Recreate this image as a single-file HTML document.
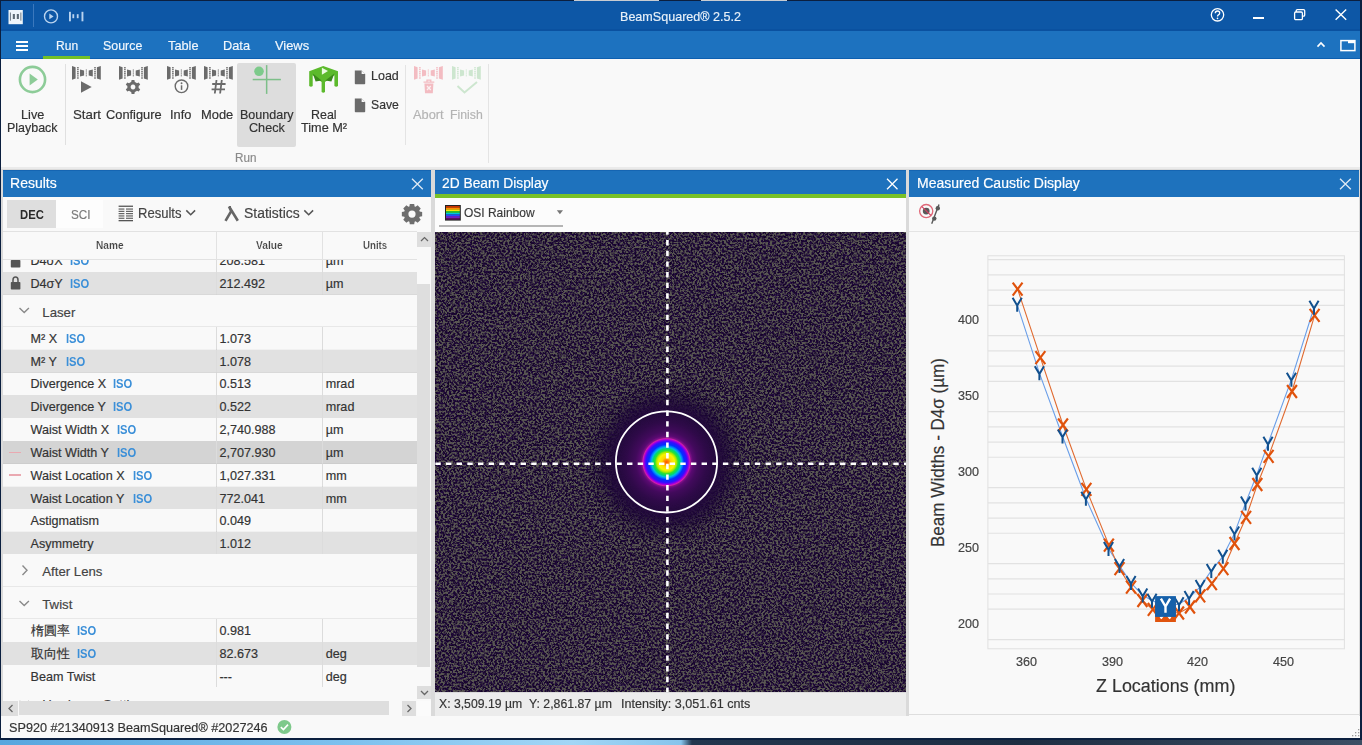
<!DOCTYPE html>
<html><head><meta charset="utf-8"><title>BeamSquared</title><style>*{margin:0;padding:0;box-sizing:border-box}
html,body{width:1362px;height:745px;overflow:hidden;background:#0b1f3f}
body{position:relative;font-family:"Liberation Sans",sans-serif}
.t{position:absolute;white-space:nowrap;line-height:1;transform-origin:0 0;-webkit-text-stroke:0.18px currentColor}
svg{overflow:visible}
</style></head><body>
<div style="position:absolute;left:0px;top:0px;width:1362px;height:745px;background:#0b1f3f;"></div>
<div style="position:absolute;left:0px;top:740px;width:1362px;height:5px;background:linear-gradient(90deg,#58a6de 0%,#7cc0ee 25%,#a2d6f6 42%,#86c4ec 50%,#22364e 50.8%,#1e2e42 75%,#34465c 95%,#3c4e64 100%);"></div>
<div style="position:absolute;left:574px;top:0px;width:85px;height:1px;background:#c8ccd2;"></div>
<div style="position:absolute;left:701px;top:0px;width:86px;height:1px;background:#c8ccd2;"></div>
<div style="position:absolute;left:1px;top:1px;width:1359px;height:29px;background:#0d57a6;"></div>
<div style="position:absolute;left:1px;top:30px;width:1359px;height:29px;background:#1d72bf;"></div>
<div style="position:absolute;left:1px;top:29.4px;width:1359px;height:1.2px;background:#0a51a0;"></div>
<div style="position:absolute;left:1px;top:57.8px;width:1359px;height:1.4px;background:#0d5fb0;"></div>
<div style="position:absolute;left:1px;top:59.2px;width:1359px;height:1px;background:#fdfdfd;"></div>
<div style="position:absolute;left:1px;top:59px;width:1359px;height:108px;background:#f9f9f9;"></div>
<div style="position:absolute;left:1px;top:167px;width:1359px;height:2.7px;background:#ebebeb;"></div>
<div style="position:absolute;left:1px;top:169px;width:1359px;height:547px;background:#dadada;"></div>
<div style="position:absolute;left:1px;top:716px;width:1359px;height:22px;background:#f9f9f9;"></div>
<svg style="position:absolute;left:8px;top:9px;" width="16" height="16" viewBox="0 0 16 16"><rect x="0.5" y="1" width="14.3" height="14.2" fill="#eef5fb"/><rect x="1.9" y="3.5" width="1.1" height="8.2" fill="#7a8590"/><rect x="4.8" y="5" width="2.1" height="5" fill="#5d6a75"/><rect x="8.8" y="5" width="2.1" height="5" fill="#5d6a75"/><rect x="12.3" y="3.5" width="1.1" height="8.2" fill="#7a8590"/></svg>
<div style="position:absolute;left:33px;top:4px;width:1px;height:23px;background:#3b78bd;"></div>
<svg style="position:absolute;left:42px;top:7px;" width="18" height="18" viewBox="0 0 18 18"><circle cx="9" cy="9.4" r="6.5" fill="none" stroke="#b9d3ef" stroke-width="1.4"/><path d="M7.3,6.6 L11.6,9.4 L7.3,12.2 Z" fill="#b9d3ef"/></svg>
<svg style="position:absolute;left:68px;top:11px;" width="18" height="12" viewBox="0 0 18 12"><rect x="1" y="0.8" width="1.9" height="9.5" fill="#b9d3ef"/><rect x="4.4" y="3.2" width="1.8" height="4" fill="#b9d3ef"/><rect x="8.8" y="3.2" width="1.8" height="4" fill="#b9d3ef"/><rect x="13.5" y="0.8" width="1.9" height="9.5" fill="#b9d3ef"/></svg>
<div class="t" id="t0" style="transform:scaleX(0.9241);left:620.40px;top:9.59px;font-size:13.6px;color:#e8f0f8;font-weight:normal;">BeamSquared® 2.5.2</div>
<svg style="position:absolute;left:1209px;top:7px;" width="18" height="18" viewBox="0 0 18 18"><circle cx="8.5" cy="7.8" r="6.2" fill="none" stroke="#fff" stroke-width="1.3"/><path d="M6.3,6.2 Q6.3,4 8.5,4 Q10.7,4 10.7,6 Q10.7,7.2 9.4,7.9 Q8.5,8.4 8.5,9.6" fill="none" stroke="#fff" stroke-width="1.3"/><circle cx="8.5" cy="11.4" r="0.8" fill="#fff"/></svg>
<div style="position:absolute;left:1253px;top:17px;width:11px;height:1.6px;background:#fff;"></div>
<svg style="position:absolute;left:1292px;top:7px;" width="16" height="15" viewBox="0 0 16 15"><rect x="4.2" y="2.6" width="8.5" height="6.5" rx="1.2" fill="none" stroke="#fff" stroke-width="1.3"/><rect x="2.6" y="5" width="7.8" height="7.6" rx="1.2" fill="#0d57a6" stroke="#fff" stroke-width="1.3"/></svg>
<svg style="position:absolute;left:1334px;top:8px;" width="14" height="13" viewBox="0 0 14 13"><path d="M1.6,1.4 L12.2,11.8 M12.2,1.4 L1.6,11.8" stroke="#fff" stroke-width="1.4"/></svg>
<div style="position:absolute;left:16px;top:41px;width:12.2px;height:1.6px;background:#fff;"></div>
<div style="position:absolute;left:16px;top:45px;width:12.2px;height:1.6px;background:#fff;"></div>
<div style="position:absolute;left:16px;top:49px;width:12.2px;height:1.6px;background:#fff;"></div>
<div class="t" id="t1" style="transform:scaleX(0.8862);left:55.90px;top:39.29px;font-size:13.6px;color:#f2f7fc;font-weight:normal;">Run</div>
<div class="t" id="t2" style="transform:scaleX(0.9123);left:102.90px;top:39.29px;font-size:13.6px;color:#f2f7fc;font-weight:normal;">Source</div>
<div class="t" id="t3" style="transform:scaleX(0.9385);left:168.00px;top:39.29px;font-size:13.6px;color:#f2f7fc;font-weight:normal;">Table</div>
<div class="t" id="t4" style="transform:scaleX(0.9402);left:223.20px;top:39.29px;font-size:13.6px;color:#f2f7fc;font-weight:normal;">Data</div>
<div class="t" id="t5" style="transform:scaleX(0.9468);left:274.90px;top:39.29px;font-size:13.6px;color:#f2f7fc;font-weight:normal;">Views</div>
<div style="position:absolute;left:43px;top:56px;width:47px;height:3px;background:#73c026;"></div>
<svg style="position:absolute;left:1314px;top:38px;" width="14" height="12" viewBox="0 0 14 12"><path d="M3.5,8.6 L7,5 L10.5,8.6" fill="none" stroke="#fff" stroke-width="1.6"/></svg>
<svg style="position:absolute;left:1339px;top:39px;" width="18" height="13" viewBox="0 0 18 13"><rect x="1.9" y="1.6" width="14" height="10" fill="none" stroke="#fff" stroke-width="1.5"/><rect x="9" y="1.6" width="7" height="2.6" fill="#fff"/></svg>
<svg style="position:absolute;left:17px;top:64px;" width="31" height="31" viewBox="0 0 31 31"><circle cx="15.5" cy="15.5" r="12.6" fill="none" stroke="#8dcc98" stroke-width="2.6"/><path d="M12.6,9.5 L20.8,15.6 L12.6,21.6 Z" fill="#8dcc98"/></svg>
<div class="t" id="t6" style="transform:scaleX(1.0421);left:20.90px;top:108.77px;font-size:12.2px;color:#333333;font-weight:normal;">Live</div>
<div class="t" id="t7" style="transform:scaleX(1.0212);left:6.50px;top:121.97px;font-size:12.2px;color:#333333;font-weight:normal;">Playback</div>
<div style="position:absolute;left:65px;top:64px;width:1px;height:81px;background:#e0e0e0;"></div>
<svg style="position:absolute;left:72px;top:66px;" width="30" height="15" viewBox="0 0 30 15"><g fill="#6b6b6b"><path d="M0,0 L3.6,1.2 L3.6,12.6 L0,13.8 Z"/><path d="M8,3.6 L12.1,4.4 L12.1,9.4 L8,10.4 Z"/><path d="M16.7,4.4 L20.8,3.6 L20.8,10.4 L16.7,9.4 Z"/><path d="M24.9,1.2 L28.8,0 L28.8,13.8 L24.9,12.6 Z"/></g><g stroke="#6b6b6b" stroke-dasharray="1.3,0.6" fill="none"><line x1="5.9" y1="0.9" x2="5.9" y2="12.9" stroke-width="1.5"/><line x1="14.3" y1="3.4" x2="14.3" y2="10.6" stroke-width="0.9"/><line x1="23" y1="0.9" x2="23" y2="12.9" stroke-width="1.5"/></g></svg>
<svg style="position:absolute;left:80px;top:80px;" width="13" height="14" viewBox="0 0 13 14"><path d="M1,1.3 L11.7,7 L1,12.7 Z" fill="#6b6b6b"/></svg>
<div class="t" id="t8" style="transform:scaleX(1.0874);left:73.20px;top:108.77px;font-size:12.2px;color:#333333;font-weight:normal;">Start</div>
<svg style="position:absolute;left:119px;top:66px;" width="30" height="15" viewBox="0 0 30 15"><g fill="#6b6b6b"><path d="M0,0 L3.6,1.2 L3.6,12.6 L0,13.8 Z"/><path d="M8,3.6 L12.1,4.4 L12.1,9.4 L8,10.4 Z"/><path d="M16.7,4.4 L20.8,3.6 L20.8,10.4 L16.7,9.4 Z"/><path d="M24.9,1.2 L28.8,0 L28.8,13.8 L24.9,12.6 Z"/></g><g stroke="#6b6b6b" stroke-dasharray="1.3,0.6" fill="none"><line x1="5.9" y1="0.9" x2="5.9" y2="12.9" stroke-width="1.5"/><line x1="14.3" y1="3.4" x2="14.3" y2="10.6" stroke-width="0.9"/><line x1="23" y1="0.9" x2="23" y2="12.9" stroke-width="1.5"/></g></svg>
<svg style="position:absolute;left:124px;top:78px;" width="18" height="18" viewBox="0 0 18 18"><g transform="translate(9,9)"><path fill="#6b6b6b" d="M-1.4,-7 L1.4,-7 L1.8,-5 Q3,-4.6 3.9,-3.8 L5.8,-4.6 L7.2,-2.2 L5.6,-0.9 Q5.8,0 5.6,0.9 L7.2,2.2 L5.8,4.6 L3.9,3.8 Q3,4.6 1.8,5 L1.4,7 L-1.4,7 L-1.8,5 Q-3,4.6 -3.9,3.8 L-5.8,4.6 L-7.2,2.2 L-5.6,0.9 Q-5.8,0 -5.6,-0.9 L-7.2,-2.2 L-5.8,-4.6 L-3.9,-3.8 Q-3,-4.6 -1.8,-5 Z M0,-2.4 A2.4,2.4 0 1 0 0.01,-2.4 Z"/></g></svg>
<div class="t" id="t9" style="transform:scaleX(1.0518);left:105.60px;top:108.77px;font-size:12.2px;color:#333333;font-weight:normal;">Configure</div>
<svg style="position:absolute;left:167px;top:66px;" width="30" height="15" viewBox="0 0 30 15"><g fill="#6b6b6b"><path d="M0,0 L3.6,1.2 L3.6,12.6 L0,13.8 Z"/><path d="M8,3.6 L12.1,4.4 L12.1,9.4 L8,10.4 Z"/><path d="M16.7,4.4 L20.8,3.6 L20.8,10.4 L16.7,9.4 Z"/><path d="M24.9,1.2 L28.8,0 L28.8,13.8 L24.9,12.6 Z"/></g><g stroke="#6b6b6b" stroke-dasharray="1.3,0.6" fill="none"><line x1="5.9" y1="0.9" x2="5.9" y2="12.9" stroke-width="1.5"/><line x1="14.3" y1="3.4" x2="14.3" y2="10.6" stroke-width="0.9"/><line x1="23" y1="0.9" x2="23" y2="12.9" stroke-width="1.5"/></g></svg>
<svg style="position:absolute;left:173px;top:78.2px;" width="18" height="18" viewBox="0 0 18 18"><circle cx="8.5" cy="8.3" r="6.3" fill="none" stroke="#6b6b6b" stroke-width="1.4"/><rect x="7.8" y="7.3" width="1.5" height="4.6" fill="#6b6b6b"/><circle cx="8.55" cy="5.3" r="0.95" fill="#6b6b6b"/></svg>
<div class="t" id="t10" style="transform:scaleX(1.0519);left:170.40px;top:108.77px;font-size:12.2px;color:#333333;font-weight:normal;">Info</div>
<svg style="position:absolute;left:204px;top:66px;" width="30" height="15" viewBox="0 0 30 15"><g fill="#6b6b6b"><path d="M0,0 L3.6,1.2 L3.6,12.6 L0,13.8 Z"/><path d="M8,3.6 L12.1,4.4 L12.1,9.4 L8,10.4 Z"/><path d="M16.7,4.4 L20.8,3.6 L20.8,10.4 L16.7,9.4 Z"/><path d="M24.9,1.2 L28.8,0 L28.8,13.8 L24.9,12.6 Z"/></g><g stroke="#6b6b6b" stroke-dasharray="1.3,0.6" fill="none"><line x1="5.9" y1="0.9" x2="5.9" y2="12.9" stroke-width="1.5"/><line x1="14.3" y1="3.4" x2="14.3" y2="10.6" stroke-width="0.9"/><line x1="23" y1="0.9" x2="23" y2="12.9" stroke-width="1.5"/></g></svg>
<svg style="position:absolute;left:210px;top:78px;" width="18" height="18" viewBox="0 0 18 18"><g stroke="#6b6b6b" stroke-width="1.8" fill="none"><path d="M6.5,2 L4.8,15.5 M11.8,2 L10.1,15.5 M2.2,6 L15.6,6 M1.6,11.4 L15,11.4"/></g></svg>
<div class="t" id="t11" style="transform:scaleX(1.0590);left:200.80px;top:108.77px;font-size:12.2px;color:#333333;font-weight:normal;">Mode</div>
<div style="position:absolute;left:237.3px;top:62.7px;width:58.6px;height:84px;background:#dddddd;border-radius:2px"></div>
<svg style="position:absolute;left:250px;top:63px;" width="34" height="34" viewBox="0 0 34 34"><circle cx="9" cy="8.3" r="4.8" fill="#7dca8b"/><rect x="15.9" y="2.1" width="1.5" height="28.8" fill="#7dbf89"/><rect x="2.7" y="15.8" width="28.2" height="1.5" fill="#7dbf89"/></svg>
<div class="t" id="t12" style="transform:scaleX(1.0274);left:240.40px;top:108.77px;font-size:12.2px;color:#333333;font-weight:normal;">Boundary</div>
<div class="t" id="t13" style="transform:scaleX(1.0363);left:248.70px;top:121.97px;font-size:12.2px;color:#333333;font-weight:normal;">Check</div>
<svg style="position:absolute;left:300px;top:60px;" width="45" height="36" viewBox="0 0 45 36"><g><path d="M23.2,6.1 L38,11.2 L38,26 Q36.2,27.4 34.4,26 L34.4,15.2 L25,22 L25,32 Q23.3,33.5 21.6,32 L21.6,22 L12.7,15.2 L12.7,26 Q11,27.4 9.2,26 L9.2,11.2 Z" fill="#5cba2c"/><path d="M12.8,13.6 L21.6,20.4 L15.6,21.5 Z M34.3,13.6 L25.4,20.4 L31.4,21.5 Z" fill="#3b8a1c"/><path d="M21.9,7.7 L28,11 L21.9,14.8 Z" fill="#eafbe0"/></g></svg>
<div class="t" id="t14" style="transform:scaleX(1.0208);left:310.60px;top:108.77px;font-size:12.2px;color:#333333;font-weight:normal;">Real</div>
<div class="t" id="t15" style="transform:scaleX(1.0399);left:300.60px;top:121.97px;font-size:12.2px;color:#333333;font-weight:normal;">Time M²</div>
<svg style="position:absolute;left:354px;top:69.5px;" width="12" height="15" viewBox="0 0 12 15"><path d="M0.8,0.5 L7.6,0.5 L11.2,4.1 L11.2,13.6 Q11.2,14.3 10.5,14.3 L1.5,14.3 Q0.8,14.3 0.8,13.6 Z" fill="#6b6b6b"/><path d="M7.6,0.5 L7.6,4.1 L11.2,4.1 Z" fill="#f9f9f9"/></svg>
<div class="t" id="t16" style="transform:scaleX(1.0249);left:370.60px;top:70.47px;font-size:12.2px;color:#333333;font-weight:normal;">Load</div>
<svg style="position:absolute;left:354px;top:97.5px;" width="12" height="15" viewBox="0 0 12 15"><path d="M0.8,0.5 L7.6,0.5 L11.2,4.1 L11.2,13.6 Q11.2,14.3 10.5,14.3 L1.5,14.3 Q0.8,14.3 0.8,13.6 Z" fill="#6b6b6b"/><path d="M7.6,0.5 L7.6,4.1 L11.2,4.1 Z" fill="#f9f9f9"/></svg>
<div class="t" id="t17" style="transform:scaleX(1.0007);left:370.60px;top:98.87px;font-size:12.2px;color:#333333;font-weight:normal;">Save</div>
<div style="position:absolute;left:405px;top:64.8px;width:1px;height:80px;background:#e4e4e4;"></div>
<svg style="position:absolute;left:414.3px;top:66.3px;" width="30" height="15" viewBox="0 0 30 15"><g fill="#f3bcc2"><path d="M0,0 L3.6,1.2 L3.6,12.6 L0,13.8 Z"/><path d="M8,3.6 L12.1,4.4 L12.1,9.4 L8,10.4 Z"/><path d="M16.7,4.4 L20.8,3.6 L20.8,10.4 L16.7,9.4 Z"/><path d="M24.9,1.2 L28.8,0 L28.8,13.8 L24.9,12.6 Z"/></g><g stroke="#f3bcc2" stroke-dasharray="1.3,0.6" fill="none"><line x1="5.9" y1="0.9" x2="5.9" y2="12.9" stroke-width="1.5"/><line x1="14.3" y1="3.4" x2="14.3" y2="10.6" stroke-width="0.9"/><line x1="23" y1="0.9" x2="23" y2="12.9" stroke-width="1.5"/></g></svg>
<svg style="position:absolute;left:422px;top:79px;" width="14" height="15" viewBox="0 0 14 15"><path d="M1.5,3.2 L12.3,3.2 M5,2.6 L5,1.2 L8.8,1.2 L8.8,2.6" stroke="#f3bcc2" stroke-width="1.3" fill="none"/><path d="M2.4,4.4 L11.4,4.4 L10.8,14.2 L3,14.2 Z" fill="#f3bcc2"/><path d="M5,7 L8.8,11 M8.8,7 L5,11" stroke="#fbf0f1" stroke-width="1.3"/></svg>
<div class="t" id="t18" style="transform:scaleX(1.0501);left:413.00px;top:108.77px;font-size:12.2px;color:#b4b4b4;font-weight:normal;">Abort</div>
<svg style="position:absolute;left:452.3px;top:66.3px;" width="30" height="15" viewBox="0 0 30 15"><g fill="#cde6cf"><path d="M0,0 L3.6,1.2 L3.6,12.6 L0,13.8 Z"/><path d="M8,3.6 L12.1,4.4 L12.1,9.4 L8,10.4 Z"/><path d="M16.7,4.4 L20.8,3.6 L20.8,10.4 L16.7,9.4 Z"/><path d="M24.9,1.2 L28.8,0 L28.8,13.8 L24.9,12.6 Z"/></g><g stroke="#cde6cf" stroke-dasharray="1.3,0.6" fill="none"><line x1="5.9" y1="0.9" x2="5.9" y2="12.9" stroke-width="1.5"/><line x1="14.3" y1="3.4" x2="14.3" y2="10.6" stroke-width="0.9"/><line x1="23" y1="0.9" x2="23" y2="12.9" stroke-width="1.5"/></g></svg>
<svg style="position:absolute;left:455px;top:79px;" width="26" height="15" viewBox="0 0 26 15"><path d="M2.5,7 L9.5,13.4 L22,3" fill="none" stroke="#cde6cf" stroke-width="2"/></svg>
<div class="t" id="t19" style="transform:scaleX(1.0057);left:450.00px;top:108.77px;font-size:12.2px;color:#b4b4b4;font-weight:normal;">Finish</div>
<div style="position:absolute;left:488.4px;top:64px;width:1px;height:99px;background:#e4e4e4;"></div>
<div class="t" id="t20" style="transform:scaleX(0.9571);left:234.50px;top:152.17px;font-size:12.2px;color:#8a8a8a;font-weight:normal;">Run</div>
<div style="position:absolute;left:3px;top:169.7px;width:428px;height:546.3px;background:#f9f9f9;"></div>
<div style="position:absolute;left:3px;top:169.7px;width:428px;height:27.8px;background:#1e72bd;"></div>
<div style="position:absolute;left:3px;top:169.7px;width:428px;height:1px;background:#1565b2;"></div>
<div class="t" id="t21" style="transform:scaleX(1.0170);left:10.00px;top:176.62px;font-size:13.8px;color:#ffffff;font-weight:normal;">Results</div>
<svg style="position:absolute;left:411px;top:178px;" width="13" height="12" viewBox="0 0 13 12"><path d="M1,0.8 L11.8,11.3 M11.8,0.8 L1,11.3" stroke="#dfeaf5" stroke-width="1.3"/></svg>
<div style="position:absolute;left:3px;top:197.5px;width:428px;height:33.5px;background:#f9f9f9;"></div>
<div style="position:absolute;left:7px;top:200px;width:49px;height:28.2px;background:#dedede;"></div>
<div style="position:absolute;left:56px;top:200px;width:46.7px;height:28.2px;background:#fdfdfd;"></div>
<div class="t" id="t22" style="transform:scaleX(0.9094);left:20.10px;top:208.70px;font-size:12.4px;color:#2a2a2a;font-weight:bold;-webkit-text-stroke:0;">DEC</div>
<div class="t" id="t23" style="transform:scaleX(0.9440);left:70.50px;top:208.70px;font-size:12.4px;color:#7a7a7a;font-weight:normal;">SCI</div>
<svg style="position:absolute;left:118px;top:205px;" width="16" height="17" viewBox="0 0 16 17"><g fill="#555"><rect x="0.6" y="0.6" width="14.4" height="1.3"/><rect x="0.6" y="15" width="14.4" height="1.3"/><rect x="0.6" y="3.5" width="5.8" height="1.1"/><rect x="8" y="3.5" width="7" height="1.1"/><rect x="0.6" y="5.8" width="5.8" height="1.1"/><rect x="8" y="5.8" width="7" height="1.1"/><rect x="0.6" y="8.1" width="5.8" height="1.1"/><rect x="8" y="8.1" width="7" height="1.1"/><rect x="0.6" y="10.4" width="5.8" height="1.1"/><rect x="8" y="10.4" width="7" height="1.1"/><rect x="0.6" y="12.7" width="5.8" height="1.1"/><rect x="8" y="12.7" width="7" height="1.1"/></g></svg>
<div class="t" id="t24" style="transform:scaleX(0.9453);left:137.50px;top:206.92px;font-size:13.8px;color:#444444;font-weight:normal;">Results</div>
<svg style="position:absolute;left:185px;top:209px;" width="12" height="8" viewBox="0 0 12 8"><path d="M1.3,1.4 L5.7,5.8 L10.1,1.4" fill="none" stroke="#555" stroke-width="1.5"/></svg>
<svg style="position:absolute;left:224px;top:205px;" width="16" height="17" viewBox="0 0 16 17"><path d="M1.5,15.8 L7.2,6.2 L5,1.5 M5.2,1.8 L13.8,15.8" fill="none" stroke="#666" stroke-width="2.6" stroke-linejoin="round"/></svg>
<div class="t" id="t25" style="transform:scaleX(1.0090);left:243.60px;top:206.92px;font-size:13.8px;color:#444444;font-weight:normal;">Statistics</div>
<svg style="position:absolute;left:302.5px;top:209px;" width="12" height="8" viewBox="0 0 12 8"><path d="M1.3,1.4 L5.7,5.8 L10.1,1.4" fill="none" stroke="#555" stroke-width="1.5"/></svg>
<svg style="position:absolute;left:400px;top:202px;" width="24" height="24" viewBox="0 0 24 24"><path d="M9.40,4.42 L9.80,1.94 L14.20,1.94 L14.60,4.42 L15.59,4.83 L17.63,3.35 L20.75,6.47 L19.27,8.51 L19.68,9.50 L22.16,9.90 L22.16,14.30 L19.68,14.70 L19.27,15.69 L20.75,17.73 L17.63,20.85 L15.59,19.37 L14.60,19.78 L14.20,22.26 L9.80,22.26 L9.40,19.78 L8.41,19.37 L6.37,20.85 L3.25,17.73 L4.73,15.69 L4.32,14.70 L1.84,14.30 L1.84,9.90 L4.32,9.50 L4.73,8.51 L3.25,6.47 L6.37,3.35 L8.41,4.83 Z M15.60,12.10 A3.6,3.6 0 1 0 8.40,12.10 A3.6,3.6 0 1 0 15.60,12.10 Z" fill="#6e6e6e" fill-rule="evenodd"/></svg>
<div style="position:absolute;left:3px;top:231px;width:413.5px;height:1px;background:#e2e2e2;"></div>
<div style="position:absolute;left:3px;top:259.5px;width:413.5px;height:441px;overflow:hidden">
<div style="position:absolute;left:0px;top:-10.099999999999994px;width:413.5px;height:22.7px;background:#f9f9f9;"></div>
<div class="t" id="t26" style="left:27.50px;top:-4.17px;font-size:12.6px;color:#333333;font-weight:normal;">D4σX</div>
<div class="t" id="t27" style="transform:scaleX(0.8893);left:66.50px;top:-4.17px;font-size:12.6px;color:#3b8fd8;font-weight:bold;-webkit-text-stroke:0;">ISO</div>
<div class="t" id="t28" style="left:216.40px;top:-4.17px;font-size:12.6px;color:#333333;font-weight:normal;">208.581</div>
<div class="t" id="t29" style="left:322.70px;top:-4.17px;font-size:12.6px;color:#333333;font-weight:normal;">µm</div>
<div style="position:absolute;left:212.5px;top:-10.099999999999994px;width:1px;height:22.7px;background:#dcdcdc;"></div>
<div style="position:absolute;left:318.8px;top:-10.099999999999994px;width:1px;height:22.7px;background:#dcdcdc;"></div>
<div style="position:absolute;left:0px;top:12.0px;width:413.5px;height:0.6px;background:rgba(0,0,0,0.03);"></div>
<svg style="position:absolute;left:6.5px;top:-5.900000000000006px;" width="12" height="15" viewBox="0 0 12 15"><path d="M3,6 L3,4 Q3,1 5.5,1 Q8,1 8,4 L8,6" fill="none" stroke="#555" stroke-width="1.5"/><rect x="0.8" y="6" width="9.6" height="7.6" rx="0.8" fill="#555"/></svg>
<div style="position:absolute;left:0px;top:12.600000000000023px;width:413.5px;height:22.6px;background:#e1e1e1;"></div>
<div class="t" id="t30" style="left:27.50px;top:18.53px;font-size:12.6px;color:#333333;font-weight:normal;">D4σY</div>
<div class="t" id="t31" style="transform:scaleX(0.8893);left:66.50px;top:18.53px;font-size:12.6px;color:#3b8fd8;font-weight:bold;-webkit-text-stroke:0;">ISO</div>
<div class="t" id="t32" style="left:216.40px;top:18.53px;font-size:12.6px;color:#333333;font-weight:normal;">212.492</div>
<div class="t" id="t33" style="left:322.70px;top:18.53px;font-size:12.6px;color:#333333;font-weight:normal;">µm</div>
<div style="position:absolute;left:212.5px;top:12.600000000000023px;width:1px;height:22.6px;background:#dcdcdc;"></div>
<div style="position:absolute;left:318.8px;top:12.600000000000023px;width:1px;height:22.6px;background:#dcdcdc;"></div>
<div style="position:absolute;left:0px;top:34.60000000000002px;width:413.5px;height:0.6px;background:rgba(0,0,0,0.03);"></div>
<svg style="position:absolute;left:6.5px;top:16.80000000000001px;" width="12" height="15" viewBox="0 0 12 15"><path d="M3,6 L3,4 Q3,1 5.5,1 Q8,1 8,4 L8,6" fill="none" stroke="#555" stroke-width="1.5"/><rect x="0.8" y="6" width="9.6" height="7.6" rx="0.8" fill="#555"/></svg>
<div style="position:absolute;left:0px;top:35.19999999999999px;width:413.5px;height:32.4px;background:#f9f9f9;"></div>
<div style="position:absolute;left:0px;top:66.59999999999997px;width:413.5px;height:1px;background:#e8e8e8;"></div>
<svg style="position:absolute;left:15px;top:46.89999999999998px;" width="13" height="9" viewBox="0 0 13 9"><path d="M1.5,2 L6.2,6.6 L10.9,2" fill="none" stroke="#8a8a8a" stroke-width="1.4"/></svg>
<div class="t" id="t34" style="left:39.30px;top:46.13px;font-size:13.2px;color:#444444;font-weight:normal;">Laser</div>
<div style="position:absolute;left:0px;top:67.60000000000002px;width:413.5px;height:22.899999999999977px;background:#f9f9f9;"></div>
<div class="t" id="t35" style="left:27.50px;top:73.53px;font-size:12.6px;color:#333333;font-weight:normal;">M² X</div>
<div class="t" id="t36" style="transform:scaleX(0.8893);left:63.00px;top:73.53px;font-size:12.6px;color:#3b8fd8;font-weight:bold;-webkit-text-stroke:0;">ISO</div>
<div class="t" id="t37" style="left:216.40px;top:73.53px;font-size:12.6px;color:#333333;font-weight:normal;">1.073</div>
<div style="position:absolute;left:212.5px;top:67.60000000000002px;width:1px;height:22.899999999999977px;background:#dcdcdc;"></div>
<div style="position:absolute;left:318.8px;top:67.60000000000002px;width:1px;height:22.899999999999977px;background:#dcdcdc;"></div>
<div style="position:absolute;left:0px;top:89.89999999999998px;width:413.5px;height:0.6px;background:rgba(0,0,0,0.03);"></div>
<div style="position:absolute;left:0px;top:90.5px;width:413.5px;height:22.5px;background:#e1e1e1;"></div>
<div class="t" id="t38" style="left:27.50px;top:96.43px;font-size:12.6px;color:#333333;font-weight:normal;">M² Y</div>
<div class="t" id="t39" style="transform:scaleX(0.8893);left:63.00px;top:96.43px;font-size:12.6px;color:#3b8fd8;font-weight:bold;-webkit-text-stroke:0;">ISO</div>
<div class="t" id="t40" style="left:216.40px;top:96.43px;font-size:12.6px;color:#333333;font-weight:normal;">1.078</div>
<div style="position:absolute;left:212.5px;top:90.5px;width:1px;height:22.5px;background:#dcdcdc;"></div>
<div style="position:absolute;left:318.8px;top:90.5px;width:1px;height:22.5px;background:#dcdcdc;"></div>
<div style="position:absolute;left:0px;top:112.39999999999998px;width:413.5px;height:0.6px;background:rgba(0,0,0,0.03);"></div>
<div style="position:absolute;left:0px;top:113.0px;width:413.5px;height:22.80000000000001px;background:#f9f9f9;"></div>
<div class="t" id="t41" style="left:27.50px;top:118.93px;font-size:12.6px;color:#333333;font-weight:normal;">Divergence X</div>
<div class="t" id="t42" style="transform:scaleX(0.8893);left:110.40px;top:118.93px;font-size:12.6px;color:#3b8fd8;font-weight:bold;-webkit-text-stroke:0;">ISO</div>
<div class="t" id="t43" style="left:216.40px;top:118.93px;font-size:12.6px;color:#333333;font-weight:normal;">0.513</div>
<div class="t" id="t44" style="left:322.70px;top:118.93px;font-size:12.6px;color:#333333;font-weight:normal;">mrad</div>
<div style="position:absolute;left:212.5px;top:113.0px;width:1px;height:22.80000000000001px;background:#dcdcdc;"></div>
<div style="position:absolute;left:318.8px;top:113.0px;width:1px;height:22.80000000000001px;background:#dcdcdc;"></div>
<div style="position:absolute;left:0px;top:135.2px;width:413.5px;height:0.6px;background:rgba(0,0,0,0.03);"></div>
<div style="position:absolute;left:0px;top:135.8px;width:413.5px;height:23.0px;background:#e1e1e1;"></div>
<div class="t" id="t45" style="left:27.50px;top:141.73px;font-size:12.6px;color:#333333;font-weight:normal;">Divergence Y</div>
<div class="t" id="t46" style="transform:scaleX(0.8893);left:110.40px;top:141.73px;font-size:12.6px;color:#3b8fd8;font-weight:bold;-webkit-text-stroke:0;">ISO</div>
<div class="t" id="t47" style="left:216.40px;top:141.73px;font-size:12.6px;color:#333333;font-weight:normal;">0.522</div>
<div class="t" id="t48" style="left:322.70px;top:141.73px;font-size:12.6px;color:#333333;font-weight:normal;">mrad</div>
<div style="position:absolute;left:212.5px;top:135.8px;width:1px;height:23.0px;background:#dcdcdc;"></div>
<div style="position:absolute;left:318.8px;top:135.8px;width:1px;height:23.0px;background:#dcdcdc;"></div>
<div style="position:absolute;left:0px;top:158.2px;width:413.5px;height:0.6px;background:rgba(0,0,0,0.03);"></div>
<div style="position:absolute;left:0px;top:158.8px;width:413.5px;height:22.80000000000001px;background:#f9f9f9;"></div>
<div class="t" id="t49" style="left:27.50px;top:164.73px;font-size:12.6px;color:#333333;font-weight:normal;">Waist Width X</div>
<div class="t" id="t50" style="transform:scaleX(0.8893);left:114.00px;top:164.73px;font-size:12.6px;color:#3b8fd8;font-weight:bold;-webkit-text-stroke:0;">ISO</div>
<div class="t" id="t51" style="left:216.40px;top:164.73px;font-size:12.6px;color:#333333;font-weight:normal;">2,740.988</div>
<div class="t" id="t52" style="left:322.70px;top:164.73px;font-size:12.6px;color:#333333;font-weight:normal;">µm</div>
<div style="position:absolute;left:212.5px;top:158.8px;width:1px;height:22.80000000000001px;background:#dcdcdc;"></div>
<div style="position:absolute;left:318.8px;top:158.8px;width:1px;height:22.80000000000001px;background:#dcdcdc;"></div>
<div style="position:absolute;left:0px;top:181.0px;width:413.5px;height:0.6px;background:rgba(0,0,0,0.03);"></div>
<div style="position:absolute;left:0px;top:181.60000000000002px;width:413.5px;height:22.599999999999966px;background:#d4d4d4;"></div>
<div class="t" id="t53" style="left:27.50px;top:187.53px;font-size:12.6px;color:#333333;font-weight:normal;">Waist Width Y</div>
<div class="t" id="t54" style="transform:scaleX(0.8893);left:114.00px;top:187.53px;font-size:12.6px;color:#3b8fd8;font-weight:bold;-webkit-text-stroke:0;">ISO</div>
<div class="t" id="t55" style="left:216.40px;top:187.53px;font-size:12.6px;color:#333333;font-weight:normal;">2,707.930</div>
<div class="t" id="t56" style="left:322.70px;top:187.53px;font-size:12.6px;color:#333333;font-weight:normal;">µm</div>
<div style="position:absolute;left:212.5px;top:181.60000000000002px;width:1px;height:22.599999999999966px;background:#dcdcdc;"></div>
<div style="position:absolute;left:318.8px;top:181.60000000000002px;width:1px;height:22.599999999999966px;background:#dcdcdc;"></div>
<div style="position:absolute;left:0px;top:203.59999999999997px;width:413.5px;height:0.6px;background:rgba(0,0,0,0.03);"></div>
<div style="position:absolute;left:5.5px;top:192.0px;width:12.7px;height:1.8px;background:#eaa9b1;"></div>
<div style="position:absolute;left:0px;top:204.2px;width:413.5px;height:22.900000000000034px;background:#f9f9f9;"></div>
<div class="t" id="t57" style="left:27.50px;top:210.13px;font-size:12.6px;color:#333333;font-weight:normal;">Waist Location X</div>
<div class="t" id="t58" style="transform:scaleX(0.8893);left:130.00px;top:210.13px;font-size:12.6px;color:#3b8fd8;font-weight:bold;-webkit-text-stroke:0;">ISO</div>
<div class="t" id="t59" style="left:216.40px;top:210.13px;font-size:12.6px;color:#333333;font-weight:normal;">1,027.331</div>
<div class="t" id="t60" style="left:322.70px;top:210.13px;font-size:12.6px;color:#333333;font-weight:normal;">mm</div>
<div style="position:absolute;left:212.5px;top:204.2px;width:1px;height:22.900000000000034px;background:#dcdcdc;"></div>
<div style="position:absolute;left:318.8px;top:204.2px;width:1px;height:22.900000000000034px;background:#dcdcdc;"></div>
<div style="position:absolute;left:0px;top:226.5px;width:413.5px;height:0.6px;background:rgba(0,0,0,0.03);"></div>
<div style="position:absolute;left:5.5px;top:214.59999999999997px;width:12.7px;height:1.8px;background:#eaa9b1;"></div>
<div style="position:absolute;left:0px;top:227.10000000000002px;width:413.5px;height:22.5px;background:#e1e1e1;"></div>
<div class="t" id="t61" style="left:27.50px;top:233.03px;font-size:12.6px;color:#333333;font-weight:normal;">Waist Location Y</div>
<div class="t" id="t62" style="transform:scaleX(0.8893);left:130.00px;top:233.03px;font-size:12.6px;color:#3b8fd8;font-weight:bold;-webkit-text-stroke:0;">ISO</div>
<div class="t" id="t63" style="left:216.40px;top:233.03px;font-size:12.6px;color:#333333;font-weight:normal;">772.041</div>
<div class="t" id="t64" style="left:322.70px;top:233.03px;font-size:12.6px;color:#333333;font-weight:normal;">mm</div>
<div style="position:absolute;left:212.5px;top:227.10000000000002px;width:1px;height:22.5px;background:#dcdcdc;"></div>
<div style="position:absolute;left:318.8px;top:227.10000000000002px;width:1px;height:22.5px;background:#dcdcdc;"></div>
<div style="position:absolute;left:0px;top:249.0px;width:413.5px;height:0.6px;background:rgba(0,0,0,0.03);"></div>
<div style="position:absolute;left:0px;top:249.60000000000002px;width:413.5px;height:22.600000000000023px;background:#f9f9f9;"></div>
<div class="t" id="t65" style="left:27.50px;top:255.53px;font-size:12.6px;color:#333333;font-weight:normal;">Astigmatism</div>
<div class="t" id="t66" style="left:216.40px;top:255.53px;font-size:12.6px;color:#333333;font-weight:normal;">0.049</div>
<div style="position:absolute;left:212.5px;top:249.60000000000002px;width:1px;height:22.600000000000023px;background:#dcdcdc;"></div>
<div style="position:absolute;left:318.8px;top:249.60000000000002px;width:1px;height:22.600000000000023px;background:#dcdcdc;"></div>
<div style="position:absolute;left:0px;top:271.6px;width:413.5px;height:0.6px;background:rgba(0,0,0,0.03);"></div>
<div style="position:absolute;left:0px;top:272.20000000000005px;width:413.5px;height:22.5px;background:#e1e1e1;"></div>
<div class="t" id="t67" style="left:27.50px;top:278.13px;font-size:12.6px;color:#333333;font-weight:normal;">Asymmetry</div>
<div class="t" id="t68" style="left:216.40px;top:278.13px;font-size:12.6px;color:#333333;font-weight:normal;">1.012</div>
<div style="position:absolute;left:212.5px;top:272.20000000000005px;width:1px;height:22.5px;background:#dcdcdc;"></div>
<div style="position:absolute;left:318.8px;top:272.20000000000005px;width:1px;height:22.5px;background:#dcdcdc;"></div>
<div style="position:absolute;left:0px;top:294.1px;width:413.5px;height:0.6px;background:rgba(0,0,0,0.03);"></div>
<div style="position:absolute;left:0px;top:294.70000000000005px;width:413.5px;height:33.0px;background:#f9f9f9;"></div>
<div style="position:absolute;left:0px;top:326.70000000000005px;width:413.5px;height:1px;background:#e8e8e8;"></div>
<svg style="position:absolute;left:17px;top:304.70000000000005px;" width="9" height="13" viewBox="0 0 9 13"><path d="M2.5,1.5 L7,6.2 L2.5,10.9" fill="none" stroke="#8a8a8a" stroke-width="1.4"/></svg>
<div class="t" id="t69" style="left:39.30px;top:305.93px;font-size:13.2px;color:#444444;font-weight:normal;">After Lens</div>
<div style="position:absolute;left:0px;top:327.70000000000005px;width:413.5px;height:32.2px;background:#f9f9f9;"></div>
<div style="position:absolute;left:0px;top:358.9000000000001px;width:413.5px;height:1px;background:#e8e8e8;"></div>
<svg style="position:absolute;left:15px;top:339.30000000000007px;" width="13" height="9" viewBox="0 0 13 9"><path d="M1.5,2 L6.2,6.6 L10.9,2" fill="none" stroke="#8a8a8a" stroke-width="1.4"/></svg>
<div class="t" id="t70" style="left:39.30px;top:338.53px;font-size:13.2px;color:#444444;font-weight:normal;">Twist</div>
<div style="position:absolute;left:0px;top:359.9px;width:413.5px;height:22.7px;background:#f9f9f9;"></div>
<div class="t" id="t71" style="left:27.50px;top:365.83px;font-size:12.6px;color:#333333;font-weight:normal;">楕圓率</div>
<div class="t" id="t72" style="transform:scaleX(0.8893);left:74.00px;top:365.83px;font-size:12.6px;color:#3b8fd8;font-weight:bold;-webkit-text-stroke:0;">ISO</div>
<div class="t" id="t73" style="left:216.40px;top:365.83px;font-size:12.6px;color:#333333;font-weight:normal;">0.981</div>
<div style="position:absolute;left:212.5px;top:359.9px;width:1px;height:22.7px;background:#dcdcdc;"></div>
<div style="position:absolute;left:318.8px;top:359.9px;width:1px;height:22.7px;background:#dcdcdc;"></div>
<div style="position:absolute;left:0px;top:382.0px;width:413.5px;height:0.6px;background:rgba(0,0,0,0.03);"></div>
<div style="position:absolute;left:0px;top:382.6px;width:413.5px;height:23.1px;background:#e1e1e1;"></div>
<div class="t" id="t74" style="left:27.50px;top:388.53px;font-size:12.6px;color:#333333;font-weight:normal;">取向性</div>
<div class="t" id="t75" style="transform:scaleX(0.8893);left:74.00px;top:388.53px;font-size:12.6px;color:#3b8fd8;font-weight:bold;-webkit-text-stroke:0;">ISO</div>
<div class="t" id="t76" style="left:216.40px;top:388.53px;font-size:12.6px;color:#333333;font-weight:normal;">82.673</div>
<div class="t" id="t77" style="left:322.70px;top:388.53px;font-size:12.6px;color:#333333;font-weight:normal;">deg</div>
<div style="position:absolute;left:212.5px;top:382.6px;width:1px;height:23.1px;background:#dcdcdc;"></div>
<div style="position:absolute;left:318.8px;top:382.6px;width:1px;height:23.1px;background:#dcdcdc;"></div>
<div style="position:absolute;left:0px;top:405.1px;width:413.5px;height:0.6px;background:rgba(0,0,0,0.03);"></div>
<div style="position:absolute;left:0px;top:405.70000000000005px;width:413.5px;height:22.2px;background:#f9f9f9;"></div>
<div class="t" id="t78" style="left:27.50px;top:411.63px;font-size:12.6px;color:#333333;font-weight:normal;">Beam Twist</div>
<div class="t" id="t79" style="left:216.40px;top:411.63px;font-size:12.6px;color:#333333;font-weight:normal;">---</div>
<div class="t" id="t80" style="left:322.70px;top:411.63px;font-size:12.6px;color:#333333;font-weight:normal;">deg</div>
<div style="position:absolute;left:212.5px;top:405.70000000000005px;width:1px;height:22.2px;background:#dcdcdc;"></div>
<div style="position:absolute;left:318.8px;top:405.70000000000005px;width:1px;height:22.2px;background:#dcdcdc;"></div>
<div style="position:absolute;left:0px;top:427.30000000000007px;width:413.5px;height:0.6px;background:rgba(0,0,0,0.03);"></div>
<div style="position:absolute;left:0px;top:427.9px;width:413.5px;height:32.4px;background:#f9f9f9;"></div>
<div style="position:absolute;left:0px;top:459.29999999999995px;width:413.5px;height:1px;background:#e8e8e8;"></div>
<svg style="position:absolute;left:15px;top:439.6px;" width="13" height="9" viewBox="0 0 13 9"><path d="M1.5,2 L6.2,6.6 L10.9,2" fill="none" stroke="#8a8a8a" stroke-width="1.4"/></svg>
<div class="t" id="t81" style="left:39.30px;top:438.83px;font-size:13.2px;color:#444444;font-weight:normal;">Hardware Settings</div>
</div>
<div style="position:absolute;left:3px;top:232px;width:413.5px;height:27.5px;background:#f9f9f9;"></div>
<div style="position:absolute;left:3px;top:259px;width:413.5px;height:1px;background:#e2e2e2;"></div>
<div style="position:absolute;left:215.5px;top:232px;width:1px;height:27.5px;background:#e2e2e2;"></div>
<div style="position:absolute;left:321.8px;top:232px;width:1px;height:27.5px;background:#e2e2e2;"></div>
<div class="t" id="t82" style="transform:scaleX(0.9529);left:95.60px;top:239.93px;font-size:10.6px;color:#444444;font-weight:bold;-webkit-text-stroke:0;-webkit-text-stroke:0.15px #f9f9f9">Name</div>
<div class="t" id="t83" style="transform:scaleX(0.9643);left:255.70px;top:239.93px;font-size:10.6px;color:#444444;font-weight:bold;-webkit-text-stroke:0;-webkit-text-stroke:0.15px #f9f9f9">Value</div>
<div class="t" id="t84" style="transform:scaleX(0.9137);left:362.80px;top:239.93px;font-size:10.6px;color:#444444;font-weight:bold;-webkit-text-stroke:0;-webkit-text-stroke:0.15px #f9f9f9">Units</div>
<div style="position:absolute;left:416.5px;top:232px;width:14.5px;height:468.5px;background:#f9f9f9;"></div>
<div style="position:absolute;left:416.7px;top:232px;width:15px;height:14.6px;background:#dedede;"></div>
<svg style="position:absolute;left:416.7px;top:232px;" width="15" height="15" viewBox="0 0 15 15"><path d="M4,9 L7.5,5.6 L11,9" fill="none" stroke="#666" stroke-width="1.3"/></svg>
<div style="position:absolute;left:417px;top:284px;width:13.3px;height:383.4px;background:#dedede;"></div>
<div style="position:absolute;left:416.8px;top:685.7px;width:14.2px;height:13.7px;background:#dedede;"></div>
<svg style="position:absolute;left:416.8px;top:685.7px;" width="15" height="14" viewBox="0 0 15 14"><path d="M4,5 L7.5,8.5 L11,5" fill="none" stroke="#666" stroke-width="1.3"/></svg>
<div style="position:absolute;left:3px;top:700.5px;width:428px;height:15.5px;background:#f9f9f9;"></div>
<div style="position:absolute;left:3px;top:700.5px;width:14.6px;height:15px;background:#dedede;"></div>
<svg style="position:absolute;left:3px;top:700.5px;" width="15" height="15" viewBox="0 0 15 15"><path d="M9.5,4 L6,7.5 L9.5,11" fill="none" stroke="#666" stroke-width="1.3"/></svg>
<div style="position:absolute;left:18.6px;top:701px;width:370.8px;height:14.2px;background:#dedede;"></div>
<div style="position:absolute;left:401.7px;top:700.5px;width:14.1px;height:15px;background:#dedede;"></div>
<svg style="position:absolute;left:401.7px;top:700.5px;" width="15" height="15" viewBox="0 0 15 15"><path d="M5.5,4 L9,7.5 L5.5,11" fill="none" stroke="#666" stroke-width="1.3"/></svg>
<div style="position:absolute;left:416.8px;top:700.5px;width:14.2px;height:15px;background:#fbfbfb;"></div>
<div style="position:absolute;left:435px;top:169.7px;width:471px;height:24.5px;background:#1e72bd;"></div>
<div style="position:absolute;left:435px;top:169.7px;width:471px;height:1px;background:#1565b2;"></div>
<div style="position:absolute;left:435px;top:194.2px;width:471px;height:3.4px;background:#79c128;"></div>
<div class="t" id="t85" style="transform:scaleX(0.9991);left:442.00px;top:177.22px;font-size:13.8px;color:#ffffff;font-weight:normal;">2D Beam Display</div>
<svg style="position:absolute;left:886px;top:178px;" width="13" height="12" viewBox="0 0 13 12"><path d="M1,0.8 L11.5,11.3 M11.5,0.8 L1,11.3" stroke="#ffffff" stroke-width="1.3"/></svg>
<div style="position:absolute;left:435px;top:197.6px;width:471px;height:34.8px;background:#fcfcfc;"></div>
<svg style="position:absolute;left:444.7px;top:205px;" width="16" height="16" viewBox="0 0 16 16"><rect x="0" y="0" width="15.8" height="15.6" fill="#222"/><rect x="1" y="1.00" width="13.8" height="1.75" fill="#c83000"/><rect x="1" y="2.70" width="13.8" height="1.75" fill="#ff8a00"/><rect x="1" y="4.40" width="13.8" height="1.75" fill="#ffe600"/><rect x="1" y="6.10" width="13.8" height="1.75" fill="#2fcf2f"/><rect x="1" y="7.80" width="13.8" height="1.75" fill="#00c8d8"/><rect x="1" y="9.50" width="13.8" height="1.75" fill="#1f4fff"/><rect x="1" y="11.20" width="13.8" height="1.75" fill="#7a22d8"/><rect x="1" y="12.90" width="13.8" height="1.75" fill="#5a1060"/></svg>
<div class="t" id="t86" style="transform:scaleX(0.9363);left:464.30px;top:206.66px;font-size:12.8px;color:#3a3a3a;font-weight:normal;">OSI Rainbow</div>
<svg style="position:absolute;left:556px;top:210px;" width="8" height="5" viewBox="0 0 8 5"><path d="M0.8,0.3 L7,0.3 L3.9,4.2 Z" fill="#777"/></svg>
<div style="position:absolute;left:439.1px;top:224.9px;width:124.1px;height:2px;background:#b5b5b5;"></div>
<svg style="position:absolute;left:435px;top:232.4px;overflow:hidden" width="471" height="460.1" viewBox="0 0 471 460.1"><defs>
<filter id="nz" x="0" y="0" width="100%" height="100%" filterUnits="userSpaceOnUse" color-interpolation-filters="sRGB">
 <feTurbulence type="fractalNoise" baseFrequency="0.48" numOctaves="2" seed="7"/>
 <feColorMatrix type="matrix" values="0 0 0 0 0.35  0 0 0 0 0.34  0 0 0 0 0.32  5 0 0 0 -2.1"/>
</filter>
<filter id="nzp" x="0" y="0" width="100%" height="100%" filterUnits="userSpaceOnUse" color-interpolation-filters="sRGB">
 <feTurbulence type="fractalNoise" baseFrequency="0.9" numOctaves="1" seed="21"/>
 <feColorMatrix type="matrix" values="0 0 0 0 0.04  0 0 0 0 0.01  0 0 0 0 0.08  0 3 0 0 -1.3"/>
</filter>
<filter id="nzq" x="0" y="0" width="100%" height="100%" filterUnits="userSpaceOnUse" color-interpolation-filters="sRGB">
 <feTurbulence type="fractalNoise" baseFrequency="0.9" numOctaves="1" seed="33"/>
 <feColorMatrix type="matrix" values="0 0 0 0 0.24  0 0 0 0 0.08  0 0 0 0 0.42  0 0 3.0 0 -1.75"/>
</filter>
<radialGradient id="bm" cx="231.5" cy="230.20000000000002" r="70" gradientUnits="userSpaceOnUse"><stop offset="0.0000" stop-color="#ff5000" stop-opacity="1"/><stop offset="0.0357" stop-color="#ff9000" stop-opacity="1"/><stop offset="0.0643" stop-color="#ffd800" stop-opacity="1"/><stop offset="0.1143" stop-color="#f8f400" stop-opacity="1"/><stop offset="0.1429" stop-color="#a8ec00" stop-opacity="1"/><stop offset="0.1643" stop-color="#30e030" stop-opacity="1"/><stop offset="0.1900" stop-color="#00d870" stop-opacity="1"/><stop offset="0.2114" stop-color="#00bce0" stop-opacity="1"/><stop offset="0.2314" stop-color="#0078ff" stop-opacity="1"/><stop offset="0.2514" stop-color="#0030ff" stop-opacity="1"/><stop offset="0.2900" stop-color="#3010ff" stop-opacity="1"/><stop offset="0.3086" stop-color="#7000f0" stop-opacity="1"/><stop offset="0.3243" stop-color="#b000d8" stop-opacity="1"/><stop offset="0.3371" stop-color="#d020a8" stop-opacity="1"/><stop offset="0.3514" stop-color="#801088" stop-opacity="1"/><stop offset="0.3786" stop-color="#5a0a72" stop-opacity="1"/><stop offset="0.4429" stop-color="#420a5c" stop-opacity="1"/><stop offset="0.5714" stop-color="#300a4a" stop-opacity="0.95"/><stop offset="0.7143" stop-color="#260a40" stop-opacity="0.8"/><stop offset="1.0000" stop-color="#1e073a" stop-opacity="0"/></radialGradient>
<radialGradient id="msk" cx="231.5" cy="230.20000000000002" r="95" gradientUnits="userSpaceOnUse">
 <stop offset="0" stop-color="#000"/><stop offset="0.5" stop-color="#000"/><stop offset="0.66" stop-color="#888"/><stop offset="0.88" stop-color="#fff"/></radialGradient>
<mask id="mk"><rect width="471" height="460.1" fill="url(#msk)"/></mask>
</defs>
<rect width="471" height="460.1" fill="#1e073a"/>
<rect width="471" height="460.1" filter="url(#nzp)"/>
<g mask="url(#mk)"><rect width="471" height="460.1" filter="url(#nzq)"/><rect width="471" height="460.1" fill="#fff" filter="url(#nz)"/></g>
<circle cx="231.5" cy="230.20000000000002" r="70" fill="url(#bm)"/>
<circle cx="231.5" cy="229.9" r="50.6" fill="none" stroke="#fff" stroke-width="1.8"/>
<line x1="232.39999999999998" y1="0" x2="232.39999999999998" y2="460.1" stroke="#fff" stroke-width="2.6" stroke-dasharray="5.4,5.25" stroke-dashoffset="2.55"/>
<line x1="0" y1="231.70000000000002" x2="471" y2="231.70000000000002" stroke="#fff" stroke-width="2.6" stroke-dasharray="5.4,5.25" stroke-dashoffset="10.3"/>
</svg>
<div style="position:absolute;left:435px;top:692.5px;width:471px;height:23.5px;background:#ececec;"></div>
<div class="t" id="t87" style="transform:scaleX(0.9700);left:438.50px;top:697.83px;font-size:12.6px;color:#333333;font-weight:normal;">X: 3,509.19 µm</div>
<div class="t" id="t88" style="transform:scaleX(0.9755);left:529.30px;top:697.83px;font-size:12.6px;color:#333333;font-weight:normal;">Y: 2,861.87 µm</div>
<div class="t" id="t89" style="transform:scaleX(0.9982);left:621.00px;top:697.83px;font-size:12.6px;color:#333333;font-weight:normal;">Intensity: 3,051.61 cnts</div>
<div style="position:absolute;left:909px;top:169.7px;width:450.20000000000005px;height:546.3px;background:#f9f9f9;"></div>
<div style="position:absolute;left:909px;top:169.7px;width:450.20000000000005px;height:27.8px;background:#1e72bd;"></div>
<div style="position:absolute;left:909px;top:169.7px;width:450.20000000000005px;height:1px;background:#1565b2;"></div>
<div class="t" id="t90" style="transform:scaleX(1.0158);left:917.00px;top:177.02px;font-size:13.8px;color:#ffffff;font-weight:normal;">Measured Caustic Display</div>
<svg style="position:absolute;left:1339px;top:178px;" width="13" height="12" viewBox="0 0 13 12"><path d="M1,0.8 L11.8,11.3 M11.8,0.8 L1,11.3" stroke="#dfeaf5" stroke-width="1.3"/></svg>
<svg style="position:absolute;left:914px;top:200px;" width="30" height="28" viewBox="0 0 30 28"><circle cx="12.2" cy="11.1" r="6.6" fill="none" stroke="#e06878" stroke-width="1.3"/><circle cx="12.2" cy="11.1" r="3.4" fill="#595959"/><path d="M7.9,6.6 L16.9,15.4" stroke="#d04060" stroke-width="1.2"/><path d="M17.7,23.8 L25,4.4" stroke="#595959" stroke-width="1.4"/><circle cx="23.8" cy="8.3" r="2.2" fill="#595959"/><circle cx="20.3" cy="18.6" r="2.2" fill="#595959"/></svg>
<div style="position:absolute;left:909px;top:231.3px;width:450.20000000000005px;height:1px;background:#e4e4e4;"></div>
<div style="position:absolute;left:909px;top:713.8px;width:450.20000000000005px;height:1.2px;background:#dedede;"></div>
<svg style="position:absolute;left:0px;top:0px;pointer-events:none" width="1362" height="745" viewBox="0 0 1362 745"><rect x="987.9" y="255.8" width="356.5000000000001" height="392.99999999999994" fill="none" stroke="#e0e0e0" stroke-width="1"/><line x1="987.9" y1="639.60" x2="1344.4" y2="639.60" stroke="#e2e2e2" stroke-width="1.2"/><line x1="987.9" y1="609.21" x2="1344.4" y2="609.21" stroke="#e2e2e2" stroke-width="1.2"/><line x1="987.9" y1="594.01" x2="1344.4" y2="594.01" stroke="#e2e2e2" stroke-width="1.2"/><line x1="987.9" y1="578.82" x2="1344.4" y2="578.82" stroke="#e2e2e2" stroke-width="1.2"/><line x1="987.9" y1="563.62" x2="1344.4" y2="563.62" stroke="#e2e2e2" stroke-width="1.2"/><line x1="987.9" y1="533.23" x2="1344.4" y2="533.23" stroke="#e2e2e2" stroke-width="1.2"/><line x1="987.9" y1="518.03" x2="1344.4" y2="518.03" stroke="#e2e2e2" stroke-width="1.2"/><line x1="987.9" y1="502.84" x2="1344.4" y2="502.84" stroke="#e2e2e2" stroke-width="1.2"/><line x1="987.9" y1="487.64" x2="1344.4" y2="487.64" stroke="#e2e2e2" stroke-width="1.2"/><line x1="987.9" y1="457.25" x2="1344.4" y2="457.25" stroke="#e2e2e2" stroke-width="1.2"/><line x1="987.9" y1="442.06" x2="1344.4" y2="442.06" stroke="#e2e2e2" stroke-width="1.2"/><line x1="987.9" y1="426.87" x2="1344.4" y2="426.87" stroke="#e2e2e2" stroke-width="1.2"/><line x1="987.9" y1="411.67" x2="1344.4" y2="411.67" stroke="#e2e2e2" stroke-width="1.2"/><line x1="987.9" y1="381.28" x2="1344.4" y2="381.28" stroke="#e2e2e2" stroke-width="1.2"/><line x1="987.9" y1="366.08" x2="1344.4" y2="366.08" stroke="#e2e2e2" stroke-width="1.2"/><line x1="987.9" y1="350.89" x2="1344.4" y2="350.89" stroke="#e2e2e2" stroke-width="1.2"/><line x1="987.9" y1="335.69" x2="1344.4" y2="335.69" stroke="#e2e2e2" stroke-width="1.2"/><line x1="987.9" y1="305.31" x2="1344.4" y2="305.31" stroke="#e2e2e2" stroke-width="1.2"/><line x1="987.9" y1="290.11" x2="1344.4" y2="290.11" stroke="#e2e2e2" stroke-width="1.2"/><line x1="987.9" y1="274.92" x2="1344.4" y2="274.92" stroke="#e2e2e2" stroke-width="1.2"/><line x1="987.9" y1="259.72" x2="1344.4" y2="259.72" stroke="#e2e2e2" stroke-width="1.2"/></svg>
<div class="t" id="t91" style="transform:scaleX(1.0067);left:957.80px;top:314.32px;font-size:12.5px;color:#444444;font-weight:normal;">400</div>
<div class="t" id="t92" style="transform:scaleX(1.0067);left:957.80px;top:390.29px;font-size:12.5px;color:#444444;font-weight:normal;">350</div>
<div class="t" id="t93" style="transform:scaleX(1.0067);left:957.80px;top:466.27px;font-size:12.5px;color:#444444;font-weight:normal;">300</div>
<div class="t" id="t94" style="transform:scaleX(1.0067);left:957.80px;top:542.24px;font-size:12.5px;color:#444444;font-weight:normal;">250</div>
<div class="t" id="t95" style="transform:scaleX(1.0067);left:957.80px;top:618.22px;font-size:12.5px;color:#444444;font-weight:normal;">200</div>
<div class="t" id="t96" style="transform:scaleX(1.0067);left:1016.00px;top:656.32px;font-size:12.5px;color:#444444;font-weight:normal;">360</div>
<div class="t" id="t97" style="transform:scaleX(1.0067);left:1101.63px;top:656.32px;font-size:12.5px;color:#444444;font-weight:normal;">390</div>
<div class="t" id="t98" style="transform:scaleX(1.0067);left:1187.26px;top:656.32px;font-size:12.5px;color:#444444;font-weight:normal;">420</div>
<div class="t" id="t99" style="transform:scaleX(1.0067);left:1272.89px;top:656.32px;font-size:12.5px;color:#444444;font-weight:normal;">450</div>
<div class="t" id="t100" style="transform:scaleX(1.0184);left:1096.30px;top:677.50px;font-size:17.6px;color:#333333;font-weight:normal;">Z Locations (mm)</div>
<div class="t" id="t101" style="left:930.30px;top:546.7px;font-size:17.6px;color:#333;transform-origin:0 0;transform:rotate(-90deg) scaleX(0.9692)">Beam Widths - D4σ (µm)</div>
<svg style="position:absolute;left:0px;top:0px;pointer-events:none" width="1362" height="745" viewBox="0 0 1362 745"><polyline points="1017.2,304.6 1039.4,373.1 1062.5,436.2 1085.9,498.5 1108.5,548.8 1119.5,565.8 1131,582.8 1142.7,595.3 1152,600.5 1165.5,606.5 1179,604 1189.1,597.8 1200.2,586.8 1211.3,570.7 1222.8,556.6 1234.5,533.4 1245.5,503.2 1256.8,474.6 1268,443.6 1291.4,379.6 1314,307.5" fill="none" stroke="#6a9ee8" stroke-width="1.1"/><polyline points="1017.6,289.1 1040.4,357.6 1063,425 1086.4,489.4 1108.9,545.1 1119.5,568.7 1131,587.2 1142.4,600.5 1152.8,609.4 1165.5,611.5 1179,613 1190,607 1200.2,595.8 1211.9,583.7 1223.4,568.6 1234.5,543.5 1246.1,517.3 1257.3,484.5 1268.6,456.3 1292,391.5 1314.6,315.4" fill="none" stroke="#e06a30" stroke-width="1.1"/><path d="M1012.70,282.60 L1022.50,295.60 M1022.50,282.60 L1012.70,295.60" stroke="#e0520c" stroke-width="2.15" fill="none"/><path d="M1035.50,351.10 L1045.30,364.10 M1045.30,351.10 L1035.50,364.10" stroke="#e0520c" stroke-width="2.15" fill="none"/><path d="M1058.10,418.50 L1067.90,431.50 M1067.90,418.50 L1058.10,431.50" stroke="#e0520c" stroke-width="2.15" fill="none"/><path d="M1081.50,482.90 L1091.30,495.90 M1091.30,482.90 L1081.50,495.90" stroke="#e0520c" stroke-width="2.15" fill="none"/><path d="M1104.00,538.60 L1113.80,551.60 M1113.80,538.60 L1104.00,551.60" stroke="#e0520c" stroke-width="2.15" fill="none"/><path d="M1114.60,562.20 L1124.40,575.20 M1124.40,562.20 L1114.60,575.20" stroke="#e0520c" stroke-width="2.15" fill="none"/><path d="M1126.10,580.70 L1135.90,593.70 M1135.90,580.70 L1126.10,593.70" stroke="#e0520c" stroke-width="2.15" fill="none"/><path d="M1137.50,594.00 L1147.30,607.00 M1147.30,594.00 L1137.50,607.00" stroke="#e0520c" stroke-width="2.15" fill="none"/><path d="M1147.90,602.90 L1157.70,615.90 M1157.70,602.90 L1147.90,615.90" stroke="#e0520c" stroke-width="2.15" fill="none"/><path d="M1174.10,606.50 L1183.90,619.50 M1183.90,606.50 L1174.10,619.50" stroke="#e0520c" stroke-width="2.15" fill="none"/><path d="M1185.10,600.50 L1194.90,613.50 M1194.90,600.50 L1185.10,613.50" stroke="#e0520c" stroke-width="2.15" fill="none"/><path d="M1195.30,589.30 L1205.10,602.30 M1205.10,589.30 L1195.30,602.30" stroke="#e0520c" stroke-width="2.15" fill="none"/><path d="M1207.00,577.20 L1216.80,590.20 M1216.80,577.20 L1207.00,590.20" stroke="#e0520c" stroke-width="2.15" fill="none"/><path d="M1218.50,562.10 L1228.30,575.10 M1228.30,562.10 L1218.50,575.10" stroke="#e0520c" stroke-width="2.15" fill="none"/><path d="M1229.60,537.00 L1239.40,550.00 M1239.40,537.00 L1229.60,550.00" stroke="#e0520c" stroke-width="2.15" fill="none"/><path d="M1241.20,510.80 L1251.00,523.80 M1251.00,510.80 L1241.20,523.80" stroke="#e0520c" stroke-width="2.15" fill="none"/><path d="M1252.40,478.00 L1262.20,491.00 M1262.20,478.00 L1252.40,491.00" stroke="#e0520c" stroke-width="2.15" fill="none"/><path d="M1263.70,449.80 L1273.50,462.80 M1273.50,449.80 L1263.70,462.80" stroke="#e0520c" stroke-width="2.15" fill="none"/><path d="M1287.10,385.00 L1296.90,398.00 M1296.90,385.00 L1287.10,398.00" stroke="#e0520c" stroke-width="2.15" fill="none"/><path d="M1309.70,308.90 L1319.50,321.90 M1319.50,308.90 L1309.70,321.90" stroke="#e0520c" stroke-width="2.15" fill="none"/><path d="M1012.60,297.80 L1017.20,305.60 L1021.80,297.80 M1017.20,305.60 L1017.20,311.80" stroke="#11508e" stroke-width="2.0" fill="none"/><path d="M1034.80,366.30 L1039.40,374.10 L1044.00,366.30 M1039.40,374.10 L1039.40,380.30" stroke="#11508e" stroke-width="2.0" fill="none"/><path d="M1057.90,429.40 L1062.50,437.20 L1067.10,429.40 M1062.50,437.20 L1062.50,443.40" stroke="#11508e" stroke-width="2.0" fill="none"/><path d="M1081.30,491.70 L1085.90,499.50 L1090.50,491.70 M1085.90,499.50 L1085.90,505.70" stroke="#11508e" stroke-width="2.0" fill="none"/><path d="M1103.90,542.00 L1108.50,549.80 L1113.10,542.00 M1108.50,549.80 L1108.50,556.00" stroke="#11508e" stroke-width="2.0" fill="none"/><path d="M1114.90,559.00 L1119.50,566.80 L1124.10,559.00 M1119.50,566.80 L1119.50,573.00" stroke="#11508e" stroke-width="2.0" fill="none"/><path d="M1126.40,576.00 L1131.00,583.80 L1135.60,576.00 M1131.00,583.80 L1131.00,590.00" stroke="#11508e" stroke-width="2.0" fill="none"/><path d="M1138.10,588.50 L1142.70,596.30 L1147.30,588.50 M1142.70,596.30 L1142.70,602.50" stroke="#11508e" stroke-width="2.0" fill="none"/><path d="M1147.40,593.70 L1152.00,601.50 L1156.60,593.70 M1152.00,601.50 L1152.00,607.70" stroke="#11508e" stroke-width="2.0" fill="none"/><path d="M1174.40,597.20 L1179.00,605.00 L1183.60,597.20 M1179.00,605.00 L1179.00,611.20" stroke="#11508e" stroke-width="2.0" fill="none"/><path d="M1184.50,591.00 L1189.10,598.80 L1193.70,591.00 M1189.10,598.80 L1189.10,605.00" stroke="#11508e" stroke-width="2.0" fill="none"/><path d="M1195.60,580.00 L1200.20,587.80 L1204.80,580.00 M1200.20,587.80 L1200.20,594.00" stroke="#11508e" stroke-width="2.0" fill="none"/><path d="M1206.70,563.90 L1211.30,571.70 L1215.90,563.90 M1211.30,571.70 L1211.30,577.90" stroke="#11508e" stroke-width="2.0" fill="none"/><path d="M1218.20,549.80 L1222.80,557.60 L1227.40,549.80 M1222.80,557.60 L1222.80,563.80" stroke="#11508e" stroke-width="2.0" fill="none"/><path d="M1229.90,526.60 L1234.50,534.40 L1239.10,526.60 M1234.50,534.40 L1234.50,540.60" stroke="#11508e" stroke-width="2.0" fill="none"/><path d="M1240.90,496.40 L1245.50,504.20 L1250.10,496.40 M1245.50,504.20 L1245.50,510.40" stroke="#11508e" stroke-width="2.0" fill="none"/><path d="M1252.20,467.80 L1256.80,475.60 L1261.40,467.80 M1256.80,475.60 L1256.80,481.80" stroke="#11508e" stroke-width="2.0" fill="none"/><path d="M1263.40,436.80 L1268.00,444.60 L1272.60,436.80 M1268.00,444.60 L1268.00,450.80" stroke="#11508e" stroke-width="2.0" fill="none"/><path d="M1286.80,372.80 L1291.40,380.60 L1296.00,372.80 M1291.40,380.60 L1291.40,386.80" stroke="#11508e" stroke-width="2.0" fill="none"/><path d="M1309.40,300.70 L1314.00,308.50 L1318.60,300.70 M1314.00,308.50 L1314.00,314.70" stroke="#11508e" stroke-width="2.0" fill="none"/><rect x="1155.1" y="601.3" width="20.8" height="20.7" fill="#e0540e"/><path d="M1160.60,605.50 L1170.40,618.50 M1170.40,605.50 L1160.60,618.50" stroke="#ffffff" stroke-width="2.4" fill="none"/><rect x="1155.1" y="596.1" width="20.8" height="20.8" fill="#1560aa"/><path d="M1160.90,598.70 L1165.50,606.50 L1170.10,598.70 M1165.50,606.50 L1165.50,612.70" stroke="#ffffff" stroke-width="2.4" fill="none"/></svg>
<div class="t" id="t102" style="transform:scaleX(0.9741);left:8.60px;top:720.60px;font-size:13px;color:#333333;font-weight:normal;">SP920 #21340913 BeamSquared® #2027246</div>
<svg style="position:absolute;left:1350px;top:728px;" width="11" height="10" viewBox="0 0 11 10"><rect x="8" y="1" width="1.3" height="1.3" fill="#9a9a9a"/><rect x="8" y="4" width="1.3" height="1.3" fill="#9a9a9a"/><rect x="5" y="4" width="1.3" height="1.3" fill="#9a9a9a"/><rect x="8" y="7" width="1.3" height="1.3" fill="#9a9a9a"/><rect x="5" y="7" width="1.3" height="1.3" fill="#9a9a9a"/><rect x="2" y="7" width="1.3" height="1.3" fill="#9a9a9a"/></svg>
<svg style="position:absolute;left:276px;top:719px;" width="17" height="17" viewBox="0 0 17 17"><circle cx="8.4" cy="8" r="7" fill="#7ec98b"/><path d="M4.8,8.2 L7.4,10.6 L12,5.6" fill="none" stroke="#fff" stroke-width="1.6"/></svg>
</body></html>
